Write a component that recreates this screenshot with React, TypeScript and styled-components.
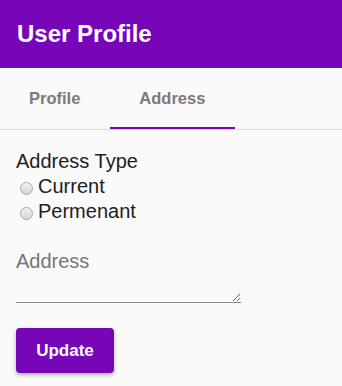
import { useState } from 'react'
import styled, { createGlobalStyle } from 'styled-components'

const purple = '#7606b8'

const GlobalStyle = createGlobalStyle`
  body {
    margin: 0;
    background: #fafafa;
    font-family: "Liberation Sans", Arial, Helvetica, sans-serif;
  }
`

const App = () => {
  const [tab, setTab] = useState('address')
  const [type, setType] = useState('')

  return (
    <Page>
      <GlobalStyle />
      <Header>
        <Title>User Profile</Title>
      </Header>

      <Tabs>
        <Tab active={tab === 'profile'} onClick={() => setTab('profile')}>Profile</Tab>
        <Tab active={tab === 'address'} onClick={() => setTab('address')}>Address</Tab>
      </Tabs>

      <Form onSubmit={(e) => e.preventDefault()}>
        <Label>Address Type</Label>
        <RadioRow>
          <Radio type="radio" name="type" checked={type === 'current'} onChange={() => setType('current')} />
          Current
        </RadioRow>
        <RadioRow>
          <Radio type="radio" name="type" checked={type === 'permanent'} onChange={() => setType('permanent')} />
          Permenant
        </RadioRow>

        <TextArea placeholder="Address" />

        <Button type="submit">Update</Button>
      </Form>
    </Page>
  )
}

export default App

const Page = styled.div`
  min-height: 100vh;
  background: #fafafa;
`

const Header = styled.header`
  height: 68px;
  background: ${purple};
  display: flex;
  align-items: center;
  padding-left: 17px;
`

const Title = styled.h1`
  margin: 0;
  color: #fff;
  font-size: 24px;
  font-weight: bold;
`

const Tabs = styled.nav`
  display: flex;
  height: 62px;
  border-bottom: 1px solid #dcdcdc;
  box-sizing: border-box;
`

const Tab = styled.button<{ active?: boolean }>`
  height: 61px;
  padding: 2px 30px 0 29px;
  border: none;
  border-bottom: 2px solid ${(p) => (p.active ? purple : 'transparent')};
  background: transparent;
  color: #7a7a7a;
  font-family: inherit;
  font-size: 16.5px;
  font-weight: bold;
  cursor: pointer;
`

const Form = styled.form`
  display: flex;
  flex-direction: column;
  align-items: flex-start;
  padding: 19px 16px;
`

const Label = styled.div`
  font-size: 20px;
  line-height: 25px;
  color: #1e1e1e;
`

const RadioRow = styled.label`
  font-size: 20px;
  line-height: 25px;
  color: #1e1e1e;
`

const Radio = styled.input`
  appearance: none;
  width: 13px;
  height: 13px;
  margin: 0 5px 0 4px;
  border-radius: 50%;
  border: 1px solid #a9a9a9;
  background: linear-gradient(#f2f2f2, #d6d6d6);
  vertical-align: -2px;
  box-sizing: border-box;

  &:checked {
    background: radial-gradient(circle, #fff 0 2px, ${purple} 3px);
    border-color: ${purple};
  }
`

const TextArea = styled.textarea`
  margin-top: 25px;
  width: 225px;
  height: 54px;
  padding: 0;
  border: none;
  border-bottom: 1px solid #8a8a8a;
  background: transparent;
  font-family: inherit;
  font-size: 20px;
  line-height: 25px;
  color: #1e1e1e;
  outline: none;
  box-sizing: border-box;

  &::placeholder {
    color: #767676;
  }
`

const Button = styled.button`
  margin-top: 25px;
  width: 98px;
  height: 45px;
  border: none;
  border-radius: 4px;
  background: ${purple};
  color: #fff;
  font-family: inherit;
  font-size: 17px;
  font-weight: bold;
  box-shadow: 0 2px 4px rgba(0, 0, 0, 0.3);
  cursor: pointer;
`
